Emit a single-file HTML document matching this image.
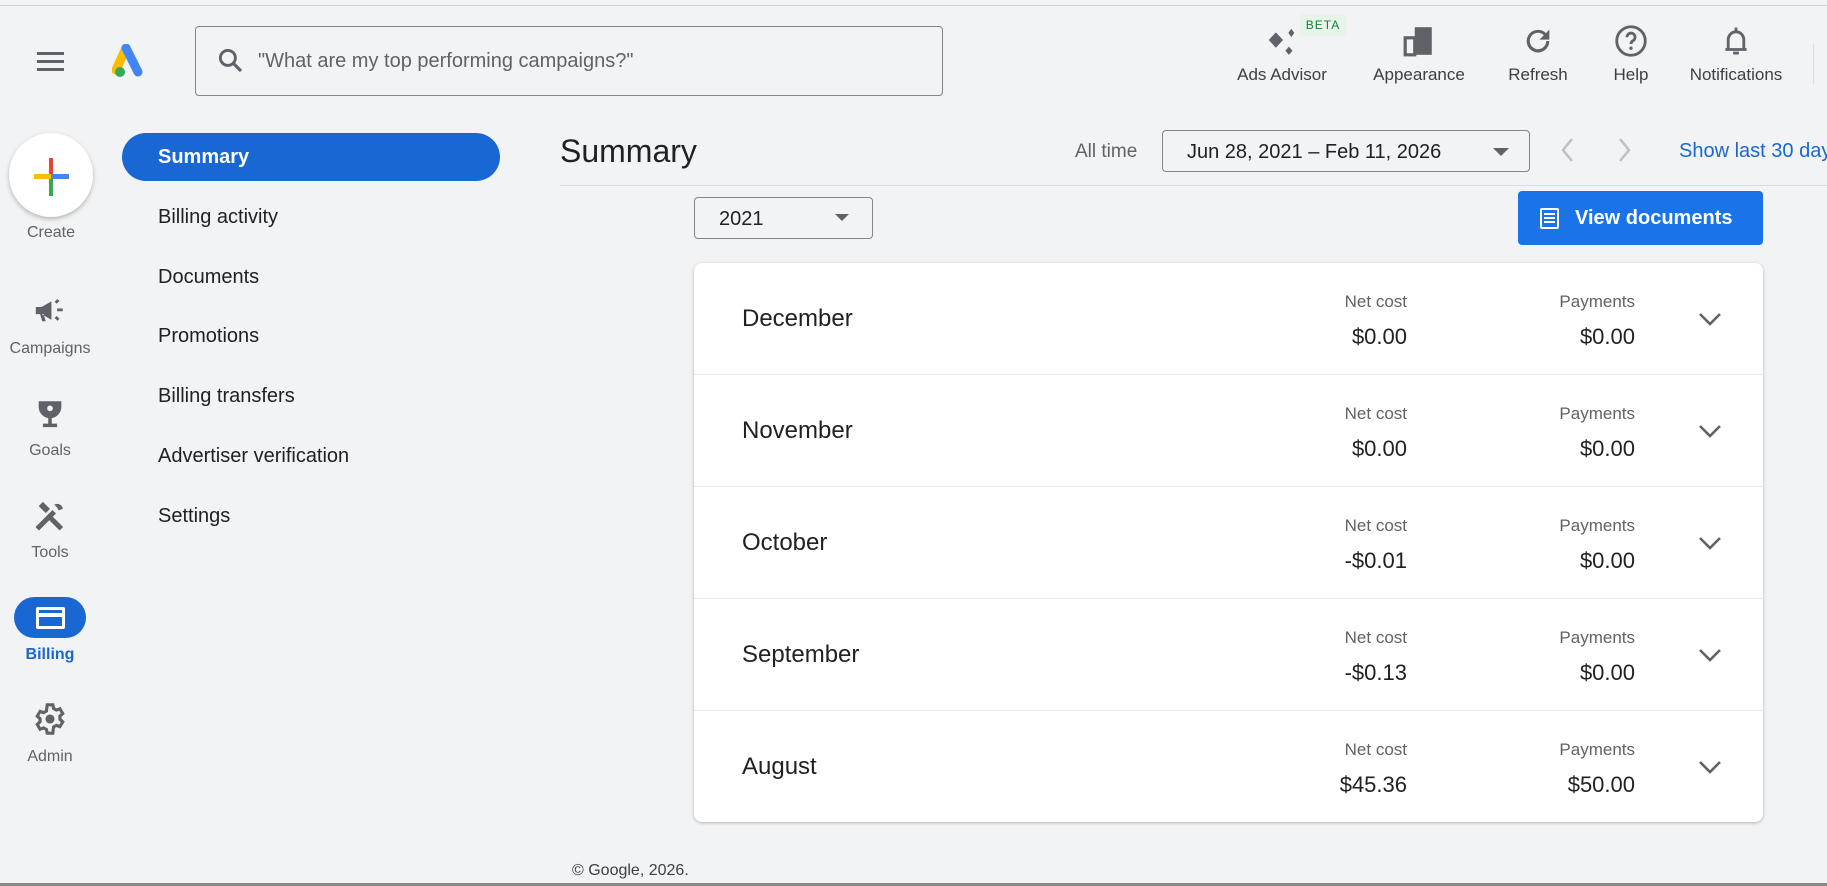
<!DOCTYPE html>
<html><head><meta charset="utf-8"><style>
*{box-sizing:border-box;margin:0;padding:0}
body{width:1827px;height:886px;background:#f1f3f4;font-family:"Liberation Sans",Arial,sans-serif;color:#202124;position:relative;overflow:hidden}
.a{position:absolute}
.topline{left:0;top:5px;width:1827px;height:1px;background:#d0d0d0}
.hi{position:absolute;text-align:center;font-size:17px;color:#3c4043;transform:translateX(-50%);white-space:nowrap;top:65px}
.rail{position:absolute;transform:translateX(-50%);text-align:center;font-size:16px;color:#5f6368;white-space:nowrap}
.nav{position:absolute;left:158px;font-size:20px;color:#202124}
.row{position:absolute;left:0;width:100%;height:112px;border-bottom:1px solid #e8eaed}
.mon{position:absolute;left:48px;top:42px;font-size:24px;color:#202124}
.lab{position:absolute;font-size:17px;color:#5f6368;text-align:right}
.val{position:absolute;font-size:22px;color:#202124;text-align:right}
</style></head><body>
<div class="a topline"></div>
<div class="a" style="left:37px;top:52px;width:27px;height:3px;background:#5f6368"></div>
<div class="a" style="left:37px;top:60px;width:27px;height:3px;background:#5f6368"></div>
<div class="a" style="left:37px;top:68px;width:27px;height:3px;background:#5f6368"></div>
<svg class="a" style="left:112px;top:44px" width="36" height="34" viewBox="0 0 36 34">
<path d="M14 4 L4 26" stroke="#fbbc04" stroke-width="9" stroke-linecap="round"/>
<path d="M14 4 L26 28" stroke="#4285f4" stroke-width="9" stroke-linecap="round"/>
<circle cx="8" cy="28" r="5" fill="#34a853"/></svg>
<div class="a" style="left:195px;top:26px;width:748px;height:70px;border:1px solid #80868b;border-radius:4px"></div>
<svg class="a" style="left:216px;top:46px" width="30" height="30" viewBox="0 0 24 24"><circle cx="9.5" cy="9.5" r="6" stroke="#5f6368" stroke-width="2.3" fill="none"/><path d="M14 14 L20 20" stroke="#5f6368" stroke-width="2.5"/></svg>
<div class="a" style="left:258px;top:50px;font-size:20px;color:#5f6368">"What are my top performing campaigns?"</div>
<svg class="a" style="left:1264px;top:24px" width="38" height="38" viewBox="0 0 32 32"><path d="M10 7 L16 13.5 L10 20 L4 13.5Z M23 4 L25.5 7.5 L23 11 L20.5 7.5Z M21 19 L24 22.5 L21 26 L18 22.5Z" fill="#5f6368"/></svg>
<div class="a" style="left:1300px;top:14px;width:46px;height:22px;background:#e6f4ea;border-radius:3px;font-size:12px;color:#188038;text-align:center;line-height:22px;letter-spacing:1px">BETA</div>
<svg class="a" style="left:1402px;top:24px" width="34" height="34" viewBox="0 0 32 32"><rect x="3" y="13" width="9" height="16" fill="none" stroke="#5f6368" stroke-width="3"/><rect x="12" y="3" width="16" height="26" fill="#5f6368"/></svg>
<svg class="a" style="left:1521px;top:24px" width="34" height="34" viewBox="0 0 24 24"><path d="M17.6 6.4A8 8 0 1 0 20 12h-2.2a5.8 5.8 0 1 1-1.7-4.1L13 11h7V4z" fill="#5f6368"/></svg>
<svg class="a" style="left:1613px;top:23px" width="36" height="36" viewBox="0 0 24 24"><circle cx="12" cy="12" r="9.5" fill="none" stroke="#5f6368" stroke-width="1.9"/><path d="M9.3 9.5a2.7 2.7 0 1 1 4 2.3c-.9.6-1.3 1-1.3 2.2" fill="none" stroke="#5f6368" stroke-width="1.9"/><circle cx="12" cy="16.8" r="1.1" fill="#5f6368"/></svg>
<svg class="a" style="left:1719px;top:23px" width="34" height="36" viewBox="0 0 24 24"><path d="M12 2.5v2M6.5 18V11a5.5 5.5 0 0 1 11 0v7M4.5 18h15M10 20.5h4" fill="none" stroke="#5f6368" stroke-width="2"/></svg>
<div class="hi" style="left:1282px">Ads Advisor</div>
<div class="hi" style="left:1419px">Appearance</div>
<div class="hi" style="left:1538px">Refresh</div>
<div class="hi" style="left:1631px">Help</div>
<div class="hi" style="left:1736px">Notifications</div>
<div class="a" style="left:1813px;top:44px;width:1px;height:40px;background:#dadce0"></div>
<div class="a" style="left:9px;top:133px;width:84px;height:84px;border-radius:50%;background:#fff;box-shadow:0 2px 5px rgba(0,0,0,.25)"></div>
<div class="a" style="left:49px;top:158px;width:4px;height:17px;background:#ea4335"></div>
<div class="a" style="left:34px;top:174px;width:17px;height:5px;background:#fbbc04"></div>
<div class="a" style="left:51px;top:174px;width:18px;height:5px;background:#4285f4"></div>
<div class="a" style="left:49px;top:179px;width:4px;height:17px;background:#34a853"></div>
<div class="rail" style="left:51px;top:224px">Create</div>
<svg class="a" style="left:33px;top:297px" width="34" height="30" viewBox="0 0 24 21"><path d="M2 7h4l7-4v13l-7-4H2z M5 12l1.5 5h2.5l-1.5-5" fill="#5f6368"/><path d="M16 4l2-2M17 9h4M16 14l2 2" stroke="#5f6368" stroke-width="2"/></svg>
<div class="rail" style="left:50px;top:340px">Campaigns</div>
<svg class="a" style="left:33px;top:397px" width="34" height="34" viewBox="0 0 24 24"><path d="M4 3h16v4a8 8 0 0 1-16 0z" fill="#5f6368"/><circle cx="12" cy="8" r="2" fill="#f1f3f4"/><path d="M12 14v5M7 20h10" stroke="#5f6368" stroke-width="2.5"/></svg>
<div class="rail" style="left:50px;top:442px">Goals</div>
<svg class="a" style="left:33px;top:499px" width="34" height="34" viewBox="0 0 24 24"><path d="M3 21L15 9M11 12l9 9" stroke="#5f6368" stroke-width="3.5"/><path d="M4 5l3-3 5 5-3 3z M15 4a4 4 0 0 1 6 3l-3 1-1-2z" fill="#5f6368"/></svg>
<div class="rail" style="left:50px;top:544px">Tools</div>
<div class="a" style="left:14px;top:597px;width:72px;height:41px;border-radius:21px;background:#1967d2"></div>
<div class="a" style="left:36px;top:607px;width:29px;height:22px;border:3px solid #fff;border-radius:2px"></div>
<div class="a" style="left:37px;top:613px;width:27px;height:4px;background:#fff"></div>
<div class="rail" style="left:50px;top:646px;color:#1967d2;font-weight:bold">Billing</div>
<svg class="a" style="left:33px;top:702px" width="34" height="34" viewBox="0 0 24 24"><path d="M10 2h4l.5 2.6 2 1.1 2.5-.9 2 3.4-2 1.8v2.2l2 1.8-2 3.4-2.5-.9-2 1.1L14 22h-4l-.5-2.6-2-1.1-2.5.9-2-3.4 2-1.8v-2.2l-2-1.8 2-3.4 2.5.9 2-1.1z" fill="none" stroke="#5f6368" stroke-width="2.2"/><circle cx="12" cy="12" r="3.2" fill="#5f6368"/></svg>
<div class="rail" style="left:50px;top:748px">Admin</div>
<div class="a" style="left:122px;top:133px;width:378px;height:48px;border-radius:24px;background:#1967d2"></div>
<div class="nav" style="top:146px;color:#fff;font-weight:bold">Summary</div>
<div class="nav" style="top:206px">Billing activity</div>
<div class="nav" style="top:266px">Documents</div>
<div class="nav" style="top:325px">Promotions</div>
<div class="nav" style="top:385px">Billing transfers</div>
<div class="nav" style="top:445px">Advertiser verification</div>
<div class="nav" style="top:505px">Settings</div>
<div class="a" style="left:560px;top:133px;font-size:32px;color:#202124">Summary</div>
<div class="a" style="left:560px;top:185px;width:1267px;height:1px;background:#dadce0"></div>
<div class="a" style="left:1075px;top:141px;font-size:19px;color:#5f6368">All time</div>
<div class="a" style="left:1162px;top:130px;width:368px;height:42px;border:1px solid #80868b;border-radius:4px"></div>
<div class="a" style="left:1187px;top:141px;font-size:20px;color:#202124">Jun 28, 2021 – Feb 11, 2026</div>
<div class="a" style="left:1493px;top:148px;border-left:8px solid transparent;border-right:8px solid transparent;border-top:8px solid #5f6368"></div>
<svg class="a" style="left:1558px;top:135px" width="20" height="30" viewBox="0 0 20 30"><path d="M14 4L5 15l9 11" fill="none" stroke="#bdc1c6" stroke-width="2.5"/></svg>
<svg class="a" style="left:1614px;top:135px" width="20" height="30" viewBox="0 0 20 30"><path d="M6 4l9 11-9 11" fill="none" stroke="#bdc1c6" stroke-width="2.5"/></svg>
<div class="a" style="left:1679px;top:140px;font-size:20px;color:#1967d2;white-space:nowrap">Show last 30 days</div>
<div class="a" style="left:694px;top:197px;width:179px;height:42px;border:1px solid #80868b;border-radius:4px"></div>
<div class="a" style="left:719px;top:208px;font-size:20px">2021</div>
<div class="a" style="left:835px;top:214px;border-left:7px solid transparent;border-right:7px solid transparent;border-top:7px solid #5f6368"></div>
<div class="a" style="left:1518px;top:191px;width:245px;height:54px;background:#1a73e8;border-radius:4px"></div>
<div class="a" style="left:1540px;top:208px;width:19px;height:21px;border:2px solid #fff;border-radius:2px"></div>
<div class="a" style="left:1544px;top:213px;width:11px;height:2px;background:#fff;box-shadow:0 4px 0 #fff,0 8px 0 #fff"></div>
<div class="a" style="left:1575px;top:207px;font-size:20px;color:#fff;font-weight:bold">View documents</div>
<div class="a" style="left:694px;top:263px;width:1069px;height:559px;background:#fff;border-radius:8px;box-shadow:0 1px 3px rgba(60,64,67,.35);overflow:hidden">
<div class="row" style="top:0"><div class="mon">December</div><div class="lab" style="right:356px;top:29px">Net cost</div><div class="val" style="right:356px;top:61px">$0.00</div><div class="lab" style="right:128px;top:29px">Payments</div><div class="val" style="right:128px;top:61px">$0.00</div></div>
<div class="row" style="top:112px"><div class="mon">November</div><div class="lab" style="right:356px;top:29px">Net cost</div><div class="val" style="right:356px;top:61px">$0.00</div><div class="lab" style="right:128px;top:29px">Payments</div><div class="val" style="right:128px;top:61px">$0.00</div></div>
<div class="row" style="top:224px"><div class="mon">October</div><div class="lab" style="right:356px;top:29px">Net cost</div><div class="val" style="right:356px;top:61px">-$0.01</div><div class="lab" style="right:128px;top:29px">Payments</div><div class="val" style="right:128px;top:61px">$0.00</div></div>
<div class="row" style="top:336px"><div class="mon">September</div><div class="lab" style="right:356px;top:29px">Net cost</div><div class="val" style="right:356px;top:61px">-$0.13</div><div class="lab" style="right:128px;top:29px">Payments</div><div class="val" style="right:128px;top:61px">$0.00</div></div>
<div class="row" style="top:448px;border:none"><div class="mon">August</div><div class="lab" style="right:356px;top:29px">Net cost</div><div class="val" style="right:356px;top:61px">$45.36</div><div class="lab" style="right:128px;top:29px">Payments</div><div class="val" style="right:128px;top:61px">$50.00</div></div>
</div>
<svg class="a" style="left:1697px;top:306px" width="26" height="500" viewBox="0 0 26 500">
<g fill="none" stroke="#5f6368" stroke-width="2.6"><path d="M3 8l10 10 10-10"/><path d="M3 120l10 10 10-10"/><path d="M3 232l10 10 10-10"/><path d="M3 344l10 10 10-10"/><path d="M3 456l10 10 10-10"/></g></svg>
<div class="a" style="left:572px;top:862px;font-size:16px;color:#3c4043">© Google, 2026.</div>
<div class="a" style="left:0;top:883px;width:1827px;height:3px;background:#8a8a8a"></div>
</body></html>
